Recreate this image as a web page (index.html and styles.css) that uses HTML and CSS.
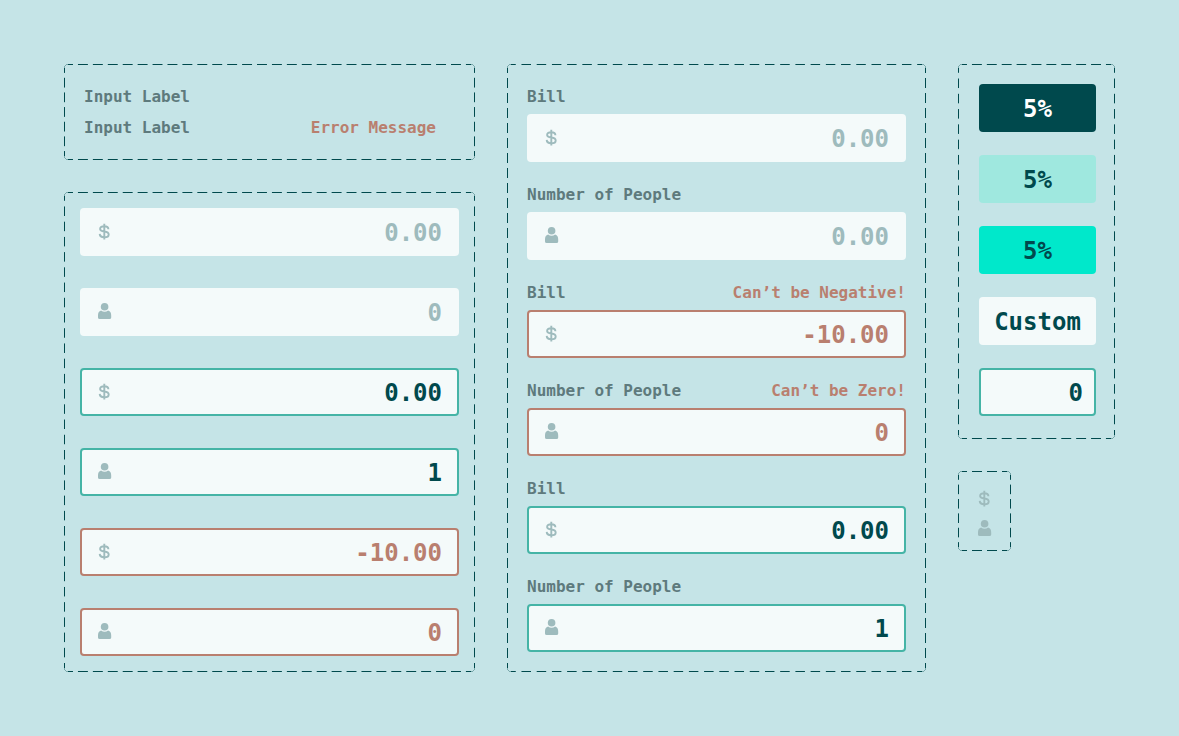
FILE: index.html
```html
<!DOCTYPE html>
<html lang="en">
<head>
<meta charset="utf-8">
<meta name="viewport" content="width=device-width, initial-scale=1">
<title>Form components</title>
<link rel="stylesheet" href="styles.css">
</head>
<body>
<svg class="sprite" aria-hidden="true">
  <symbol id="dollar" viewBox="0 0 14 18">
    <path d="M10.4 6.2C10.4 4.3 8.8 3.2 6.3 3.2C3.8 3.2 2.1 4.2 2.1 5.9C2.1 7.6 3.6 8.1 6.3 8.5C9.1 8.9 10.7 9.6 10.7 11.4C10.7 13.2 9 14.3 6.3 14.3C3.6 14.3 1.8 13.1 1.7 10.9M6.3 .8V16.6" fill="none" stroke="currentColor" stroke-width="1.9"/>
  </symbol>
  <symbol id="person" viewBox="0 0 14 18">
    <circle cx="6.6" cy="3.8" r="3.8" fill="currentColor"/>
    <path d="M3.1 7.5C5.1 9.1 8.1 9.1 10.1 7.5C12.4 8 13.2 10 13.2 12.4V14.4A1.7 1.7 0 0 1 11.5 16.1H1.7A1.7 1.7 0 0 1 0 14.4V12.4C0 10 .8 8 3.1 7.5Z" fill="currentColor"/>
  </symbol>
</svg>
<main class="board">
  <div class="column">
    <section class="panel labels">
      <div class="caption"><span>Input Label</span></div>
      <div class="caption"><span>Input Label</span><span class="message">Error Message</span></div>
    </section>
    <section class="panel inputs">
      <div class="box"><svg class="icon"><use href="#dollar"/></svg><input type="text" aria-label="Amount" placeholder="0.00"></div>
      <div class="box"><svg class="icon"><use href="#person"/></svg><input type="text" aria-label="People" placeholder="0"></div>
      <div class="box active"><svg class="icon"><use href="#dollar"/></svg><input type="text" aria-label="Active amount" value="0.00"></div>
      <div class="box active"><svg class="icon"><use href="#person"/></svg><input type="text" aria-label="Active people" value="1"></div>
      <div class="box error"><svg class="icon"><use href="#dollar"/></svg><input type="text" aria-label="Invalid amount" value="-10.00"></div>
      <div class="box error"><svg class="icon"><use href="#person"/></svg><input type="text" aria-label="Invalid people" value="0"></div>
    </section>
  </div>

  <section class="panel fields">
    <div class="field">
      <div class="caption"><label for="bill-1">Bill</label></div>
      <div class="box"><svg class="icon"><use href="#dollar"/></svg><input type="text" id="bill-1" placeholder="0.00"></div>
    </div>
    <div class="field">
      <div class="caption"><label for="people-1">Number of People</label></div>
      <div class="box"><svg class="icon"><use href="#person"/></svg><input type="text" id="people-1" placeholder="0.00"></div>
    </div>
    <div class="field">
      <div class="caption"><label for="bill-2">Bill</label><span class="message" id="bill-error">Can’t be Negative!</span></div>
      <div class="box error"><svg class="icon"><use href="#dollar"/></svg><input type="text" id="bill-2" aria-describedby="bill-error" value="-10.00"></div>
    </div>
    <div class="field">
      <div class="caption"><label for="people-2">Number of People</label><span class="message" id="people-error">Can’t be Zero!</span></div>
      <div class="box error"><svg class="icon"><use href="#person"/></svg><input type="text" id="people-2" aria-describedby="people-error" value="0"></div>
    </div>
    <div class="field">
      <div class="caption"><label for="bill-3">Bill</label></div>
      <div class="box active"><svg class="icon"><use href="#dollar"/></svg><input type="text" id="bill-3" value="0.00"></div>
    </div>
    <div class="field">
      <div class="caption"><label for="people-3">Number of People</label></div>
      <div class="box active"><svg class="icon"><use href="#person"/></svg><input type="text" id="people-3" value="1"></div>
    </div>
  </section>

  <div class="column">
    <section class="panel tips">
      <button type="button" class="tip">5%</button>
      <button type="button" class="tip hover">5%</button>
      <button type="button" class="tip selected">5%</button>
      <button type="button" class="tip custom">Custom</button>
      <div class="box active compact"><input type="text" aria-label="Custom tip" value="0"></div>
    </section>
    <section class="panel icons">
      <svg class="icon"><use href="#dollar"/></svg>
      <svg class="icon"><use href="#person"/></svg>
    </section>
  </div>
</main>
</body>
</html>
```
FILE: styles.css
```css
:root {
  --page: #c5e4e7;
  --dark: #00494d;
  --label: #5e7a7d;
  --muted: #9ebbbd;
  --field: #f4fafa;
  --active: #45b4a6;
  --error: #b97f6f;
  --arc: transparent 3px, #00494d60 3px 4px, transparent 4px;
}

* { box-sizing: border-box; }

body {
  margin: 0;
  background: var(--page);
  color: var(--dark);
  font-family: "DejaVu Sans Mono", monospace;
  font-weight: 700;
}

.sprite {
  position: absolute;
  width: 0;
  height: 0;
}

.board {
  display: grid;
  grid-template-columns: minmax(0, 411fr) minmax(0, 419fr) 157px;
  gap: 32px;
  padding: 64px;
}

.column {
  display: flex;
  flex-direction: column;
  gap: 32px;
}

/* Long-dash outline: one pseudo-element per axis, arcs on the panel */
.panel {
  position: relative;
  display: flex;
  flex-direction: column;
  background:
    radial-gradient(circle at 4px 4px, var(--arc)) 0 0 / 4px 4px no-repeat,
    radial-gradient(circle at 0 4px, var(--arc)) 100% 0 / 4px 4px no-repeat,
    radial-gradient(circle at 4px 0, var(--arc)) 0 100% / 4px 4px no-repeat,
    radial-gradient(circle at 0 0, var(--arc)) 100% 100% / 4px 4px no-repeat;
}

.panel::before,
.panel::after {
  content: "";
  position: absolute;
  pointer-events: none;
  --dash: var(--dark) 0 33%, transparent 33% 67%, var(--dark) 67%;
}

.panel::before {
  inset: 0 4px;
  background:
    linear-gradient(to right, var(--dash)) 0 0 / 15px 1px round no-repeat,
    linear-gradient(to right, var(--dash)) 0 100% / 15px 1px round no-repeat;
}

.panel::after {
  inset: 4px 0;
  background:
    linear-gradient(to bottom, var(--dash)) 0 0 / 1px 15px no-repeat round,
    linear-gradient(to bottom, var(--dash)) 100% 0 / 1px 15px no-repeat round;
}

.labels {
  flex: 1;
  gap: 5px;
  padding: 20px 39px 19px 20px;
}

.inputs {
  gap: 32px;
  padding: 16px;
}

.fields {
  gap: 20px;
  padding: 20px;
}

.tips {
  gap: 23px;
  padding: 20px 19px 23px 21px;
}

.icons {
  align-self: flex-start;
  gap: 12px;
  padding: 19px 19px 13px 20px;
}

.field {
  display: flex;
  flex-direction: column;
  gap: 4px;
}

.caption {
  display: flex;
  justify-content: space-between;
  color: var(--label);
  font-size: 16px;
  line-height: 26px;
}

.message { color: var(--error); }

.box {
  display: flex;
  align-items: center;
  height: 48px;
  padding: 0 15px 0 16px;
  border: 2px solid transparent;
  border-radius: 4px;
  background: var(--field) border-box;
}

.box.active { border-color: var(--active); }
.box.error { border-color: var(--error); }
.box.compact { padding: 0 11px; }

.box input {
  flex: 1;
  min-width: 0;
  padding: 2px 0 0;
  border: 0;
  outline: 0;
  background: none;
  color: var(--dark);
  font: inherit;
  font-size: 24px;
  line-height: 36px;
  text-align: right;
}

.box input::placeholder {
  color: var(--muted);
  opacity: 1;
}

.box.error input { color: var(--error); }

.icon {
  flex: none;
  width: 14px;
  height: 18px;
  color: var(--muted);
}

.tip {
  height: 48px;
  padding: 2px 0 0;
  border: 0;
  border-radius: 4px;
  background: var(--dark);
  color: #fff;
  font: inherit;
  font-size: 24px;
  line-height: 36px;
  cursor: pointer;
}

.tip.hover {
  background: #9fe8df;
  color: var(--dark);
}

.tip.selected {
  background: #00e8cb;
  color: var(--dark);
}

.tip.custom {
  background: var(--field);
  color: var(--dark);
}
```
